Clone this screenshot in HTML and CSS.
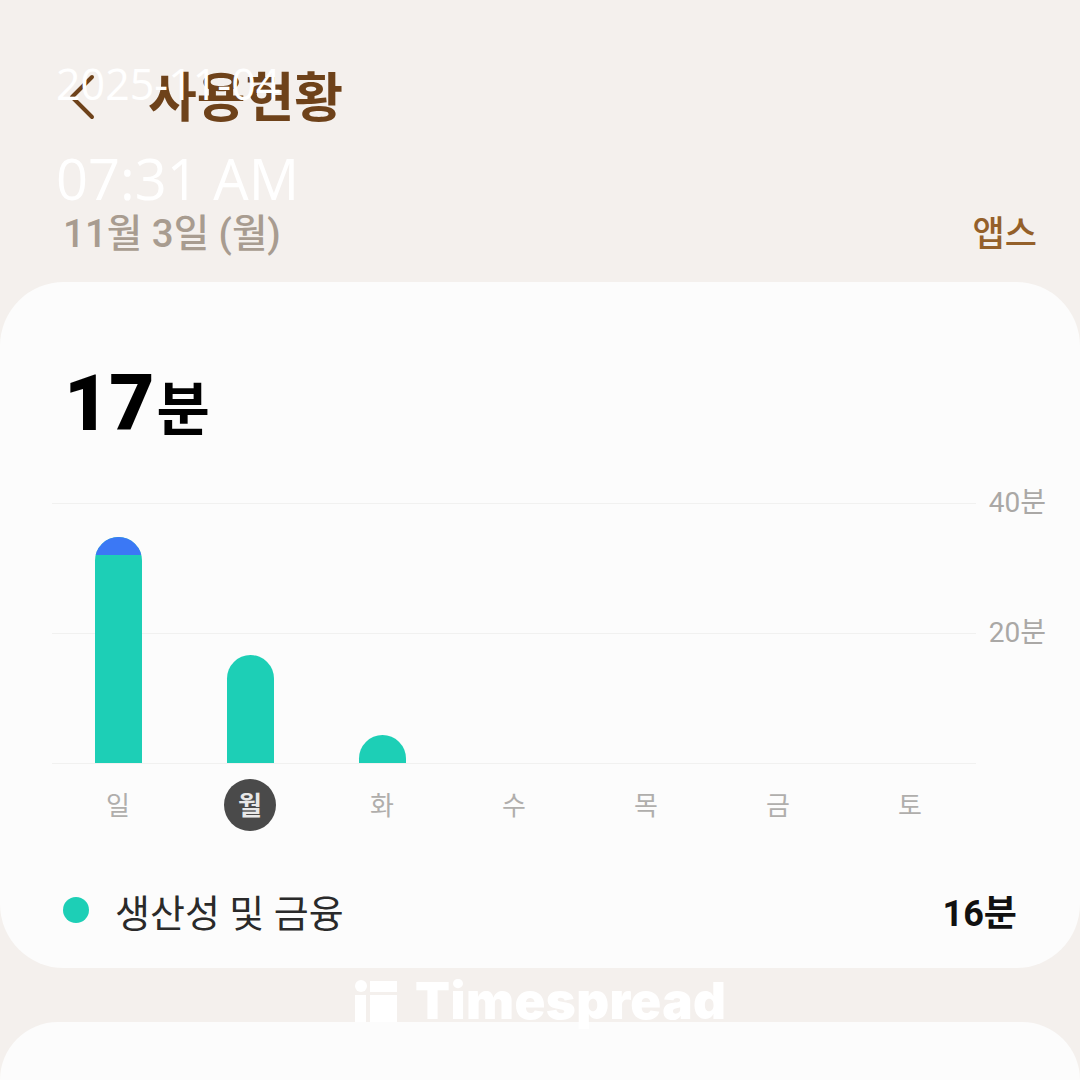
FILE: index.html
```html
<!DOCTYPE html>
<html lang="ko">
<head>
    <meta charset="UTF-8">
    <meta name="viewport" content="width=device-width, initial-scale=1.0">
    <title>사용 현황</title>
    <link rel="stylesheet" href="styles.css">
</head>
<body>
    <div class="screen">
        <div class="appbar">
            <svg class="back-icon" width="30" height="50" viewBox="0 0 30 50">
                <path d="M25 4 L5 24 L25 44" fill="none" stroke="#6e421a" stroke-width="4" stroke-linecap="round" stroke-linejoin="round"/>
            </svg>
            <div class="appbar-title">사용현황</div>
        </div>
        <div class="date-row">
            <div class="date-label">11월 3일 (월)</div>
            <div class="apps-link">앱스</div>
        </div>

        <div class="card">
            <div class="total"><span class="total-num">17</span><span class="total-unit">분</span></div>

            <div class="chart">
                <div class="plot">
                    <div class="plot-lines">
                        <div class="plot-line"><span class="axis-label">40분</span></div>
                        <div class="plot-line"><span class="axis-label">20분</span></div>
                        <div class="plot-line plot-line-base"></div>
                    </div>
                    <div class="plot-bars">
                        <div class="bar-slot">
                            <div class="bar" style="height: 226px">
                                <div class="bar-cap" style="height: 18px"></div>
                            </div>
                        </div>
                        <div class="bar-slot"><div class="bar" style="height: 108px"></div></div>
                        <div class="bar-slot"><div class="bar" style="height: 28px"></div></div>
                        <div class="bar-slot"></div>
                        <div class="bar-slot"></div>
                        <div class="bar-slot"></div>
                        <div class="bar-slot"></div>
                    </div>
                </div>
                <div class="days">
                    <div class="day"><span class="day-text">일</span></div>
                    <div class="day"><span class="day-active"><span class="day-text">월</span></span></div>
                    <div class="day"><span class="day-text">화</span></div>
                    <div class="day"><span class="day-text">수</span></div>
                    <div class="day"><span class="day-text">목</span></div>
                    <div class="day"><span class="day-text">금</span></div>
                    <div class="day"><span class="day-text">토</span></div>
                </div>
            </div>

            <div class="legend">
                <span class="legend-dot"></span>
                <span class="legend-name">생산성 및 금융</span>
                <span class="legend-value">16분</span>
            </div>
        </div>

        <div class="card card-next"></div>
    </div>

    <div class="stamp">
        <div class="stamp-date">2025-11-04</div>
        <div class="stamp-time">07:31 AM</div>
    </div>

    <div class="brand">
        <svg class="brand-icon" width="42" height="42" viewBox="0 0 42 42">
            <circle cx="6" cy="6" r="6" fill="#fff"/>
            <rect x="0" y="15" width="11" height="27" fill="#fff"/>
            <rect x="15" y="1" width="27" height="11" fill="#fff"/>
            <rect x="15" y="15" width="27" height="27" fill="#fff"/>
        </svg>
        <span class="brand-name">Timespread</span>
    </div>
</body>
</html>
```

FILE: styles.css
```css
body {
    margin: 0;
    width: 1080px;
    height: 1080px;
    overflow: hidden;
    position: relative;
    background-color: #f4f0ed;
    font-family: Roboto, "Noto Sans CJK KR", sans-serif;
}
.screen {
    display: flex;
    flex-direction: column;
}
.appbar {
    display: flex;
    align-items: center;
    height: 60px;
    margin-top: 68px;
    padding-left: 67px;
}
.appbar-title {
    margin-top: -8px;
    margin-left: 51px;
    font-size: 53px;
    font-weight: 700;
    color: #6e421a;
}
.date-row {
    display: flex;
    justify-content: space-between;
    align-items: center;
    height: 50px;
    margin-top: 77px;
    margin-bottom: 27px;
    padding: 0 43px 0 63px;
}
.date-label {
    font-size: 38.5px;
    font-weight: 500;
    color: #a89c90;
}
.apps-link {
    font-size: 35px;
    font-weight: 500;
    color: #94602a;
}
.card {
    box-sizing: border-box;
    height: 686px;
    padding: 76px 0 0 0;
    background-color: #fcfcfc;
    border-radius: 64px;
}
.card-next {
    flex-shrink: 0;
    height: 58px;
    margin-top: 54px;
    padding: 0;
    border-radius: 64px 64px 0 0;
}
.total {
    display: flex;
    align-items: baseline;
    height: 92px;
    padding-left: 64px;
    color: #000;
    font-weight: 700;
}
.total-num {
    font-size: 78px;
    font-weight: 900;
}
.total-unit {
    margin-left: 2px;
    font-size: 58px;
}
.chart {
    margin-top: 53px;
    padding-left: 52px;
}
.plot {
    display: grid;
    width: 924px;
}
.plot-lines, .plot-bars {
    grid-area: 1 / 1;
}
.plot-line {
    display: flex;
    justify-content: flex-end;
    height: 129px;
    border-top: 1px solid #f1f1f0;
}
.plot-line-base {
    height: 0;
}
.axis-label {
    flex-shrink: 0;
    height: 30px;
    margin-right: -70px;
    transform: translateY(-16px);
    font-size: 28px;
    line-height: 30px;
    color: #aaa8a6;
}
.plot-bars {
    display: grid;
    grid-template-columns: repeat(7, 1fr);
}
.bar-slot {
    display: flex;
    justify-content: center;
    align-items: flex-end;
    padding-bottom: 1px;
}
.bar {
    width: 47px;
    overflow: hidden;
    background-color: #1dcfb6;
    border-radius: 24px 24px 0 0;
}
.bar-cap {
    background-color: #3b78f5;
}
.days {
    display: grid;
    grid-template-columns: repeat(7, 1fr);
    width: 924px;
    margin-top: 15px;
}
.day {
    display: flex;
    justify-content: center;
    align-items: center;
    height: 52px;
    font-size: 26px;
    color: #b0aeac;
}
.day-text {
    margin-top: -3px;
}
.day-active {
    display: flex;
    justify-content: center;
    align-items: center;
    width: 52px;
    height: 52px;
    border-radius: 50%;
    background-color: #4a4a4a;
    color: #e8e8e8;
    font-weight: 700;
}
.legend {
    display: flex;
    align-items: center;
    height: 50px;
    margin-top: 54px;
    padding: 0 63px 0 63px;
}
.legend-dot {
    width: 26px;
    height: 26px;
    border-radius: 50%;
    background-color: #1dcfb6;
}
.legend-name {
    margin-left: 26px;
    font-size: 38px;
    color: #2a2a2a;
}
.legend-value {
    margin-left: auto;
    font-size: 36px;
    font-weight: 700;
    color: #111;
}

/* overlays */
.stamp {
    position: absolute;
    left: 56px;
    top: 55px;
    font-family: "Open Sans", sans-serif;
    color: #fff;
}
.stamp-date {
    font-size: 43px;
    line-height: 58px;
}
.stamp-time {
    margin-top: 27px;
    font-size: 56px;
    line-height: 76px;
}
.brand {
    position: absolute;
    left: 355px;
    top: 980px;
    display: flex;
    align-items: center;
    height: 42px;
    color: #fff;
}
.brand-name {
    margin-left: 18px;
    font-family: Inter, sans-serif;
    font-size: 51px;
    font-weight: 900;
    letter-spacing: 0.4px;
    line-height: 42px;
}
```
